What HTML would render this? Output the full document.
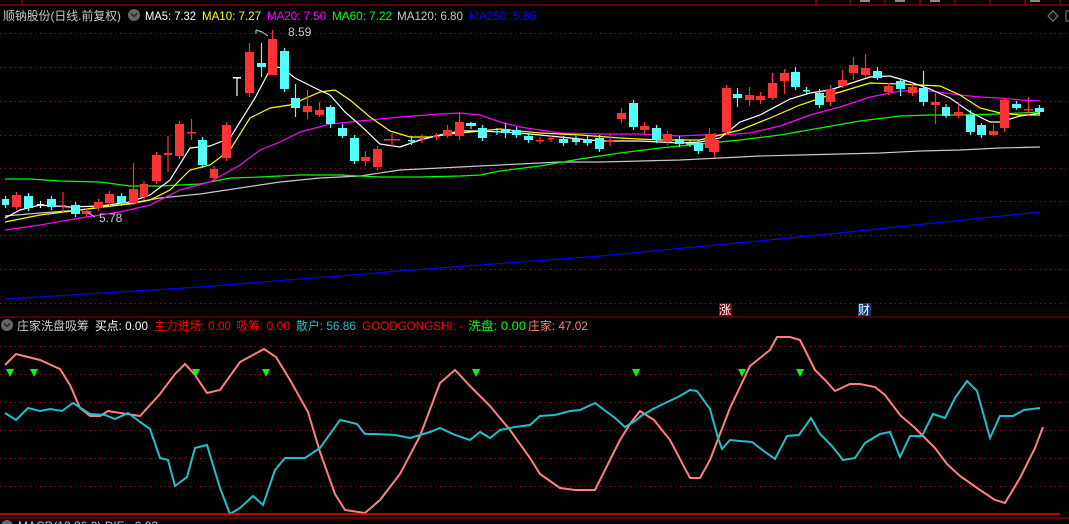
<!DOCTYPE html>
<html><head><meta charset="utf-8"><style>
html,body{margin:0;padding:0;background:#000;width:1069px;height:524px;overflow:hidden}
svg{display:block}
text{font-family:"Liberation Sans","Noto Sans CJK SC",sans-serif;font-size:12px}
</style></head><body>
<svg id="s" width="1069" height="524" xmlns="http://www.w3.org/2000/svg">
<rect width="1069" height="524" fill="#000"/>
<g id="grid"></g>
<line x1="0" y1="5" x2="1069" y2="5" stroke="#c00000" stroke-width="1"/>
<line x1="22" y1="0" x2="22" y2="5" stroke="#c00000"/>
<g stroke="#c00000"><line x1="816" y1="0" x2="816" y2="5"/><line x1="850" y1="0" x2="850" y2="5"/><line x1="885" y1="0" x2="885" y2="5"/><line x1="920" y1="0" x2="920" y2="5"/><line x1="955" y1="0" x2="955" y2="5"/><line x1="990" y1="0" x2="990" y2="5"/><line x1="1025" y1="0" x2="1025" y2="5"/><line x1="1060" y1="0" x2="1060" y2="5"/></g>
<g fill="#888"><rect x="860" y="0" width="10" height="2"/><rect x="895" y="0" width="10" height="2"/><rect x="930" y="0" width="10" height="2"/><rect x="1030" y="0" width="10" height="2"/></g>
<text x="3" y="20" fill="#c8c8c8" textLength="118" lengthAdjust="spacingAndGlyphs">顺钠股份(日线.前复权)</text>
<circle cx="134" cy="15" r="6" fill="#666"/><path d="M131 13.5 L134 16.5 L137 13.5" stroke="#222" stroke-width="1.5" fill="none"/>
<text x="145" y="20" fill="#fff" textLength="51" lengthAdjust="spacingAndGlyphs">MA5: 7.32</text>
<text x="202" y="20" fill="#ff0" textLength="59" lengthAdjust="spacingAndGlyphs">MA10: 7.27</text>
<text x="267" y="20" fill="#f0f" textLength="59" lengthAdjust="spacingAndGlyphs">MA20: 7.50</text>
<text x="332" y="20" fill="#0f0" textLength="60" lengthAdjust="spacingAndGlyphs">MA60: 7.22</text>
<text x="397" y="20" fill="#c8c8c8" textLength="66" lengthAdjust="spacingAndGlyphs">MA120: 6.80</text>
<text x="469" y="20" fill="#00f" textLength="67" lengthAdjust="spacingAndGlyphs">MA250: 5.86</text>
<path d="M1053 11 L1058 16 L1053 21 L1048 16 Z" stroke="#888" fill="none"/>
<rect x="1066" y="11" width="6" height="10" stroke="#888" fill="none"/>
<g id="ma" fill="none" stroke-width="1.2"></g>
<g id="cd"></g>
<path d="M256 30 L256 34 M256 30 L262 32 L268 36" stroke="#ccc" fill="none"/>
<text x="288" y="36" fill="#ccc">8.59</text>
<path d="M87 212 L95 217" stroke="#ccc"/><text x="99" y="222" fill="#ccc">5.78</text>
<rect x="719" y="303" width="13" height="13" fill="#8b0000"/><text x="719" y="314" fill="#fff" font-size="12">涨</text>
<rect x="858" y="303" width="13" height="13" fill="#0b3a78"/><text x="858" y="314" fill="#fff" font-size="12">财</text>
<line x1="0" y1="317" x2="1069" y2="317" stroke="#a00000"/>
<circle cx="7" cy="325" r="6" fill="#666"/><path d="M4 323.5 L7 326.5 L10 323.5" stroke="#222" stroke-width="1.5" fill="none"/>
<text x="17" y="330" fill="#c8c8c8" textLength="72" lengthAdjust="spacingAndGlyphs">庄家洗盘吸筹</text>
<text x="95" y="330" fill="#fff" textLength="53" lengthAdjust="spacingAndGlyphs">买点: 0.00</text>
<text x="154" y="330" fill="#f00" textLength="77" lengthAdjust="spacingAndGlyphs">主力进场: 0.00</text>
<text x="236" y="330" fill="#f00" textLength="54" lengthAdjust="spacingAndGlyphs">吸筹: 0.00</text>
<text x="296" y="330" fill="#20c0c0" textLength="60" lengthAdjust="spacingAndGlyphs">散户: 56.86</text>
<text x="362" y="330" fill="#f00" textLength="101" lengthAdjust="spacingAndGlyphs">GOODGONGSHI: -</text>
<text x="468" y="330" fill="#0f0" textLength="58" lengthAdjust="spacingAndGlyphs">洗盘: 0.00</text>
<text x="528" y="330" fill="#ff8080" textLength="60" lengthAdjust="spacingAndGlyphs">庄家: 47.02</text>
<g id="low" fill="none" stroke-width="2"></g>
<line x1="0" y1="514" x2="1060" y2="514" stroke="#f00" stroke-width="1.5"/>
<line x1="0" y1="518" x2="1069" y2="518" stroke="#c00" stroke-width="1"/>
<circle cx="7" cy="526" r="6" fill="#666"/>
<text x="18" y="530" fill="#c8c8c8">MACD(12,26,9) DIF: -0.03</text>
</svg>
<script>
var NS="http://www.w3.org/2000/svg";
function el(p,t,a){var e=document.createElementNS(NS,t);for(var k in a)e.setAttribute(k,a[k]);p.appendChild(e);return e;}
var g=document.getElementById('grid');
[33,67,101,135,168,201,235,269,303].forEach(function(y){el(g,'line',{x1:0,y1:y+.5,x2:1069,y2:y+.5,stroke:'#b00000','stroke-dasharray':'1 4'});});
[346,374,402,430,458,486].forEach(function(y){el(g,'line',{x1:0,y1:y+.5,x2:1069,y2:y+.5,stroke:'#b00000','stroke-dasharray':'1 4'});});
function pl(p,c,pts){el(p,'polyline',{stroke:c,points:pts.map(function(q){return q.join(',')}).join(' ')});}
var ma=document.getElementById('ma');
pl(ma,'#0000ff',[[5,299],[200,287],[400,271],[600,256],[800,237],[1040,212]]);
pl(ma,'#c8c8c8',[[5,216],[40,213],[80,210],[120,205],[160,198],[200,194],[240,188],[280,182],[320,178],[360,176],[400,170],[440,168],[480,166],[520,164],[560,162],[600,162],[640,161],[680,160],[720,158],[760,156],[800,155],[840,154],[880,153],[920,151],[960,150],[1000,148],[1040,147]]);
pl(ma,'#00ff00',[[5,179],[30,179],[60,181],[100,182],[130,186],[160,186],[200,184],[230,178],[260,177],[300,175],[340,175],[380,177],[420,177],[460,176],[480,175],[500,171],[540,166],[580,159],[620,153],[660,148],[700,144],[740,140],[780,135],[820,128],[860,121],[900,116],[930,115],[960,115],[1000,114],[1040,112]]);
pl(ma,'#ff00ff',[[5,230],[40,225],[80,218],[120,212],[150,205],[180,190],[210,182],[240,165],[260,150],[280,142],[300,132],[330,124],[360,121],[400,117],[440,114],[460,113],[480,115],[500,122],[520,127],[560,133],[600,134],[640,134],[680,136],[700,135],[720,135],[750,133],[780,126],[810,115],[840,107],[870,97],[900,91],[930,91],[960,95],[980,97],[1000,98],[1020,100],[1040,101]]);
pl(ma,'#ffff00',[[5,222],[40,215],[80,210],[100,207],[130,204],[150,200],[170,190],[190,170],[210,165],[230,150],[250,118],[270,108],[290,105],[320,92],[335,90],[350,100],[370,117],[390,131],[410,137],[430,137],[450,134],[470,132],[500,129],[540,133],[580,135],[620,138],[660,140],[700,140],[720,135],[740,130],[770,118],[800,105],[830,95],[870,83],[900,84],[940,86],[960,95],[980,108],[1000,113],[1020,115],[1040,115]]);
pl(ma,'#ffffff',[[5,218],[20,210],[40,205],[70,207],[100,206],[130,202],[150,195],[170,180],[190,148],[210,146],[230,138],[255,98],[272,66],[282,68],[295,78],[315,88],[330,95],[345,112],[360,125],[380,144],[400,147],[420,140],[440,135],[460,131],[480,131],[520,133],[560,137],[600,141],[640,141],[680,143],[700,142],[720,138],[740,122],[760,115],[790,99],[810,93],[830,90],[870,77],[890,76],[910,82],[930,89],[950,98],[970,112],[990,122],[1000,122],[1020,116],[1040,113]]);
var C=[[2,9,199,205,'c'],[12,21,195,207,'r'],[24,33,196,208,'c'],[37,44,204,205,'w'],[47,56,199,207,'c'],[60,66,205,206,'r',192,213],[71,80,205,214,'c'],[82,91,211,214,'r'],[94,103,202,208,'r'],[105,114,194,203,'r'],[117,126,196,203,'c'],[129,138,189,203,'r',163,205],[140,148,184,197,'r'],[152,161,155,181,'r'],[164,172,153,155,'r',136,172],[175,184,124,156,'r'],[187,196,132,133,'r',119,140],[198,207,140,165,'c'],[210,218,169,178,'r'],[222,231,125,158,'r'],[233,241,77,78,'w',77,96],[245,254,52,93,'r',43,97],[257,266,63,67,'c',43,77],[268,277,39,75,'r',30,75],[280,289,51,89,'c'],[291,300,98,108,'c',84,117],[303,312,106,112,'r',90,119],[315,324,110,115,'r',102,117],[326,335,107,124,'c',105,128],[338,347,128,136,'c',124,138],[350,359,138,161,'c'],[361,370,157,161,'r',151,166],[373,382,149,167,'r'],[384,400,139,140,'r',133,146],[408,415,140,141,'c',136,145],[420,424,138,139,'r',134,143],[433,440,136,137,'r'],[443,452,130,136,'r',125,138],[455,464,122,136,'r',112,140],[466,476,123,126,'c',122,129],[478,487,128,138,'c'],[494,500,131,132,'c'],[501,510,129,133,'c',123,138],[512,521,130,135,'c'],[524,533,136,140,'c'],[536,544,140,141,'r',137,144],[548,554,138,139,'r'],[559,568,139,143,'c'],[572,580,139,142,'c'],[583,592,139,143,'c'],[595,604,138,149,'c'],[606,614,140,142,'r',134,146],[617,626,113,119,'r',108,123],[629,638,103,127,'c',100,130],[640,649,126,130,'r',122,134],[652,661,128,140,'c',125,143],[663,672,134,142,'r'],[675,684,139,144,'c'],[686,694,143,144,'c'],[694,703,143,151,'c'],[705,714,134,148,'r',128,152],[710,719,140,152,'r',133,158],[722,731,88,132,'r'],[733,742,94,98,'c',88,107],[745,754,95,100,'r',87,106],[756,765,96,100,'r',92,104],[768,777,83,98,'r',73,100],[780,789,73,81,'r',69,94],[791,800,72,87,'c',67,90],[803,810,90,91,'c',87,94],[815,824,93,105,'c',89,108],[826,835,89,102,'r',85,106],[838,847,80,86,'r',70,88],[849,858,65,73,'r',57,80],[861,870,68,75,'r',54,78],[873,882,71,78,'c',67,80],[884,893,86,92,'r'],[896,905,81,89,'c',78,96],[908,917,87,93,'r'],[919,928,88,102,'c',71,106],[931,940,102,105,'r',93,124],[942,950,107,116,'c',104,118],[954,963,112,115,'r',102,118],[966,975,115,132,'c',110,135],[977,986,125,135,'c',123,138],[989,998,131,135,'r',124,136],[1000,1009,100,128,'r',98,132],[1012,1021,104,108,'c',101,110],[1024,1033,109,110,'r',97,116],[1035,1044,108,112,'c']];
var cd=document.getElementById('cd');
C.forEach(function(c){var col=c[4]=='r'?'#ff3333':c[4]=='c'?'#54ffff':'#ffffff';var m=(c[0]+c[1])/2;
 var hi=c[5]!==undefined?c[5]:c[2]-3, lo=c[6]!==undefined?c[6]:c[3]+3;
 el(cd,'line',{x1:m,y1:hi,x2:m,y2:lo,stroke:col,'stroke-width':1.2});
 el(cd,'rect',{x:c[0],y:c[2],width:c[1]-c[0],height:Math.max(1.5,c[3]-c[2]),fill:col});});
var lw=document.getElementById('low');
pl(lw,'#ff8080',[[5,365],[16,354],[40,360],[60,369],[70,385],[80,408],[90,416],[100,416],[108,411],[140,416],[160,394],[175,374],[185,364],[195,375],[207,393],[220,390],[240,362],[264,349],[276,357],[290,380],[308,412],[320,452],[335,494],[345,510],[365,513],[380,500],[400,474],[420,436],[440,383],[455,370],[470,386],[490,406],[510,430],[530,458],[540,474],[560,488],[575,490],[595,490],[610,460],[620,440],[630,424],[640,411],[654,420],[670,440],[690,478],[700,478],[710,460],[730,408],[750,366],[770,350],[777,337],[790,337],[800,340],[815,370],[826,381],[835,391],[850,384],[860,384],[875,387],[885,395],[900,415],[915,428],[935,448],[947,464],[960,476],[980,490],[995,500],[1005,503],[1020,478],[1035,448],[1043,427]]);
pl(lw,'#20c0c8',[[5,413],[16,420],[28,408],[40,411],[50,409],[62,411],[73,403],[90,414],[105,415],[115,419],[128,413],[140,422],[150,429],[160,458],[168,460],[175,486],[187,477],[195,448],[207,445],[220,488],[230,514],[240,508],[253,496],[263,505],[275,470],[285,458],[305,458],[320,448],[340,420],[345,421],[357,424],[365,434],[375,434],[395,435],[410,438],[420,435],[430,432],[440,428],[455,435],[470,440],[480,432],[490,438],[500,430],[515,427],[530,425],[540,416],[555,415],[570,411],[580,410],[595,403],[615,418],[625,427],[635,421],[641,416],[653,409],[663,404],[678,397],[690,390],[697,391],[710,409],[718,438],[722,449],[730,440],[740,441],[752,442],[765,452],[775,459],[787,436],[799,435],[811,418],[820,434],[832,446],[843,460],[855,458],[865,443],[880,434],[890,432],[900,457],[910,436],[922,436],[933,414],[945,418],[955,398],[967,381],[977,391],[990,438],[1000,416],[1013,416],[1024,410],[1040,408]]);
[10,34,196,266,476,636,742,800].forEach(function(x){el(lw,'path',{d:'M'+(x-4)+' 369 L'+(x+4)+' 369 L'+x+' 377 Z',fill:'#00ff00',stroke:'none'});});
</script>
</body></html>
